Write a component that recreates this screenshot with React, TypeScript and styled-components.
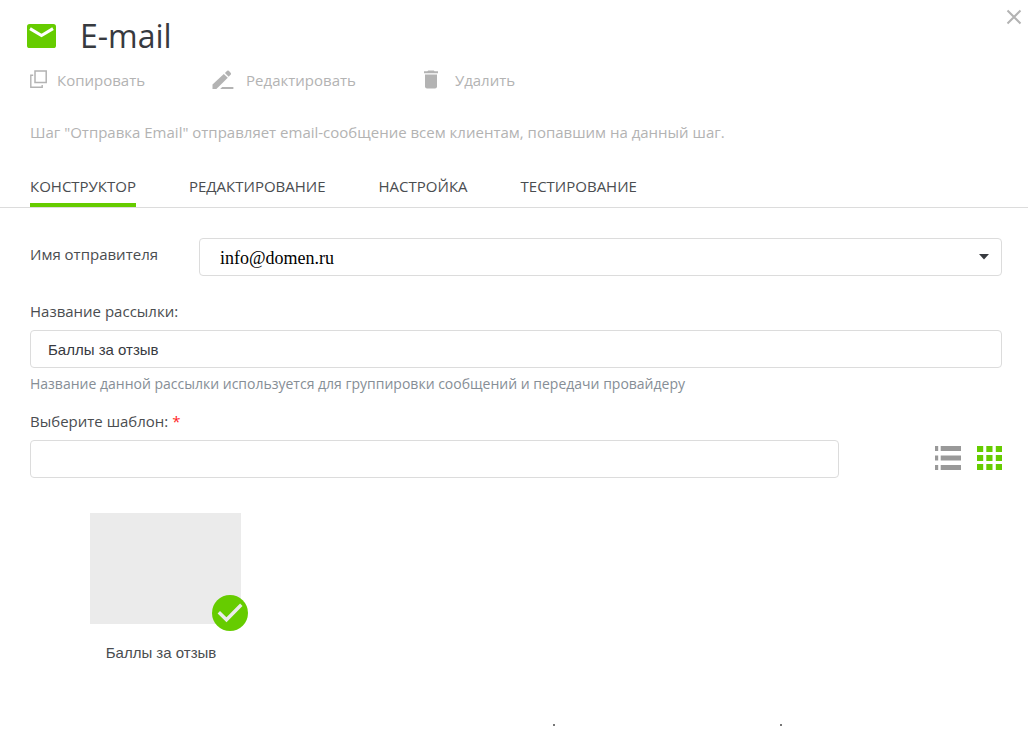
import React, { useState } from "react";
import styled, { createGlobalStyle } from "styled-components";

const GREEN = "#66cc00";
const GREY = "#b3b3b3";
const TEXT = "#4a4d50";
const BORDER = "#dcdcdc";

const GlobalStyle = createGlobalStyle`
  *, *::before, *::after { box-sizing: border-box; }
  body {
    margin: 0;
    background: #fff;
    color: ${TEXT};
    font-family: "Open Sans", "Noto Sans", sans-serif;
    font-size: 15px;
    line-height: 20px;
  }
  button, input, select { font: inherit; color: inherit; }
`;

const Page = styled.main`
  display: flex;
  flex-direction: column;
`;

const Header = styled.header`
  display: flex;
  align-items: flex-start;
  padding: 8px 4px 0 27px;
`;

const Title = styled.h1`
  flex: 1;
  display: flex;
  align-items: center;
  gap: 24px;
  margin: 0;
  height: 56px;
  font-size: 32px;
  font-weight: 400;
  line-height: 56px;
  color: #373a3f;
`;

const PlainButton = styled.button`
  display: flex;
  align-items: center;
  padding: 0;
  border: 0;
  background: none;
  cursor: pointer;
`;

const Toolbar = styled.div`
  display: flex;
  align-items: center;
  height: 32px;
  padding: 0 30px;
  gap: 67px;
`;

const ToolButton = styled(PlainButton)<{ $gap: number }>`
  gap: ${(p) => p.$gap}px;
  color: ${GREY};
  font-weight: 500;
`;

const Description = styled.p`
  margin: 26px 30px 0;
  color: ${GREY};
  font-weight: 500;
`;

const Tabs = styled.nav`
  display: flex;
  gap: 53px;
  margin-top: 34px;
  padding: 0 30px;
  border-bottom: 1px solid ${BORDER};
`;

const Tab = styled(PlainButton)<{ $active: boolean }>`
  height: 31px;
  padding-bottom: 7px;
  border-bottom: 4px solid ${(p) => (p.$active ? GREEN : "transparent")};
  text-transform: uppercase;
`;

const Form = styled.form`
  display: flex;
  flex-direction: column;
  padding: 30px 26px 0 30px;
`;

const SenderRow = styled.div`
  display: flex;
  align-items: center;
`;

const Label = styled.label`
  padding-bottom: 9px;
`;

const SenderLabel = styled(Label)`
  width: 169px;
  padding-bottom: 6px;
`;

const SelectBox = styled.div`
  position: relative;
  flex: 1;
`;

const Select = styled.select`
  display: block;
  width: 100%;
  height: 38px;
  padding: 2px 40px 0 20px;
  border: 1px solid ${BORDER};
  border-radius: 4px;
  appearance: none;
  background: #fff;
  color: #000;
  font-family: "Liberation Serif", serif;
  font-size: 18px;
`;

const Caret = styled.svg`
  position: absolute;
  right: 13px;
  top: 16px;
  pointer-events: none;
`;

const Field = styled.div`
  display: flex;
  flex-direction: column;
  margin-top: 25px;
`;

const TextInput = styled.input`
  display: block;
  width: 100%;
  height: 38px;
  padding: 0 17px;
  border: 1px solid ${BORDER};
  border-radius: 4px;
  background: #fff;
  color: #373a3f;
  font-family: "Liberation Sans", Arial, sans-serif;
`;

const Help = styled.p`
  margin: 6px 0 0;
  font-size: 14px;
  color: #868e96;
`;

const TemplateField = styled(Field)`
  margin-top: 17px;
`;

const Required = styled.span`
  color: #ff1f1f;
`;

const SearchRow = styled.div`
  display: flex;
  align-items: center;
  justify-content: space-between;
  gap: 96px;
`;

const ViewSwitch = styled.div`
  display: flex;
  gap: 16px;
  padding-bottom: 2px;
`;

const Templates = styled.section`
  display: flex;
  flex-wrap: wrap;
  padding: 35px 60px 0;
`;

const Card = styled(PlainButton)`
  flex-direction: column;
  gap: 19px;
  font-family: "Liberation Sans", Arial, sans-serif;
`;

const Preview = styled.span`
  position: relative;
  display: block;
  width: 151px;
  height: 111px;
  background: #ebebeb;
`;

const CheckBadge = styled.svg`
  position: absolute;
  right: -7px;
  bottom: -7px;
`;

const CardName = styled.span`
  padding-right: 9px;
`;

const FooterMarks = styled.footer`
  display: flex;
  justify-content: space-between;
  width: 229px;
  margin: 61px 0 0 553px;
`;

const tabs = ["Конструктор", "Редактирование", "Настройка", "Тестирование"];

export default function App() {
  const [active, setActive] = useState(0);
  const [name, setName] = useState("Баллы за отзыв");

  return (
    <>
      <GlobalStyle />
      <Page>
        <Header>
          <Title>
            <svg width="29" height="24" viewBox="0 0 29 24" aria-hidden="true">
              <rect width="29" height="24" rx="2.6" fill={GREEN} />
              <path d="M3 4.6 L14.5 11.6 L26 4.6" fill="none" stroke="#fff" strokeWidth="3" />
            </svg>
            E-mail
          </Title>
          <PlainButton type="button" aria-label="Закрыть">
            <svg width="20" height="18" viewBox="0 0 20 18" aria-hidden="true">
              <path d="M3.5 2.5 L16.5 15.5 M16.5 2.5 L3.5 15.5" stroke={GREY} strokeWidth="2" />
            </svg>
          </PlainButton>
        </Header>

        <Toolbar>
          <ToolButton type="button" $gap={10}>
            <svg width="17" height="20" viewBox="0 0 17 20" fill="none" stroke={GREY} aria-hidden="true">
              <rect x="5" y="1" width="11.2" height="11.5" strokeWidth="1.5" />
              <path d="M3.2 5.3 H0.8 V17.2 H12.2 V15" strokeWidth="1.4" />
            </svg>
            Копировать
          </ToolButton>
          <ToolButton type="button" $gap={12}>
            <svg width="22" height="20" viewBox="0 0 22 20" fill={GREY} aria-hidden="true">
              <path d="M0.5 19 V14.6 L11.8 4 L15.8 7.7 L4.4 19 Z" />
              <path d="M12.9 3 L15.2 0.8 Q16 0.2 16.8 0.8 L18.8 2.9 Q19.4 3.6 18.8 4.4 L16.7 6.7 Z" />
              <path d="M10.2 17 H21.4 V19 H8.2 Z" />
            </svg>
            Редактировать
          </ToolButton>
          <ToolButton type="button" $gap={16}>
            <svg width="16" height="20" viewBox="0 0 16 20" fill={GREY} aria-hidden="true">
              <path d="M5.2 0.5 H10.8 L11.6 1.3 H15 V3.2 H1 V1.3 H4.4 Z" />
              <path d="M2 4.4 H14 V16.6 Q14 18.6 12 18.6 H4 Q2 18.6 2 16.6 Z" />
            </svg>
            Удалить
          </ToolButton>
        </Toolbar>

        <Description>
          Шаг "Отправка Email" отправляет email-сообщение всем клиентам, попавшим на данный шаг.
        </Description>

        <Tabs>
          {tabs.map((tab, i) => (
            <Tab key={tab} type="button" $active={i === active} onClick={() => setActive(i)}>
              {tab}
            </Tab>
          ))}
        </Tabs>

        <Form>
          <SenderRow>
            <SenderLabel htmlFor="sender">Имя отправителя</SenderLabel>
            <SelectBox>
              <Select id="sender">
                <option>info@domen.ru</option>
              </Select>
              <Caret width="10" height="6" viewBox="0 0 10 6" aria-hidden="true">
                <path d="M0 0 H10 L5 5.5 Z" fill="#373a3f" />
              </Caret>
            </SelectBox>
          </SenderRow>

          <Field>
            <Label htmlFor="mailing">Название рассылки:</Label>
            <TextInput id="mailing" value={name} onChange={(e) => setName(e.target.value)} />
            <Help>Название данной рассылки используется для группировки сообщений и передачи провайдеру</Help>
          </Field>

          <TemplateField>
            <Label htmlFor="template">
              Выберите шаблон: <Required>*</Required>
            </Label>
            <SearchRow>
              <TextInput id="template" />
              <ViewSwitch>
                <PlainButton type="button" aria-label="Список">
                  <svg width="26" height="24" viewBox="0 0 26 24" fill="#999" aria-hidden="true">
                    {[0, 9.5, 19].map((y) => (
                      <React.Fragment key={y}>
                        <rect x="0" y={y} width="3.2" height="5" />
                        <rect x="5.7" y={y} width="20.3" height="5" />
                      </React.Fragment>
                    ))}
                  </svg>
                </PlainButton>
                <PlainButton type="button" aria-label="Сетка">
                  <svg width="25" height="24" viewBox="0 0 25 24" fill={GREEN} aria-hidden="true">
                    {[0, 9, 18].map((y) =>
                      [0, 9.3, 18.8].map((x) => (
                        <rect key={`${x}-${y}`} x={x} y={y} width="6.2" height="6" />
                      ))
                    )}
                  </svg>
                </PlainButton>
              </ViewSwitch>
            </SearchRow>
          </TemplateField>

          <Templates>
            <Card type="button">
              <Preview>
                <CheckBadge width="36" height="36" viewBox="0 0 36 36" aria-hidden="true">
                  <circle cx="18" cy="18" r="18" fill={GREEN} />
                  <path d="M6.8 17.2 L14.5 24.8 L29.3 9.8" fill="none" stroke="#ebebeb" strokeWidth="3.4" />
                </CheckBadge>
              </Preview>
              <CardName>Баллы за отзыв</CardName>
            </Card>
          </Templates>
        </Form>

        <FooterMarks>
          {["start", "end"].map((id) => (
            <svg key={id} width="2" height="2" aria-hidden="true">
              <rect width="2" height="2" fill="#777" />
            </svg>
          ))}
        </FooterMarks>
      </Page>
    </>
  );
}
